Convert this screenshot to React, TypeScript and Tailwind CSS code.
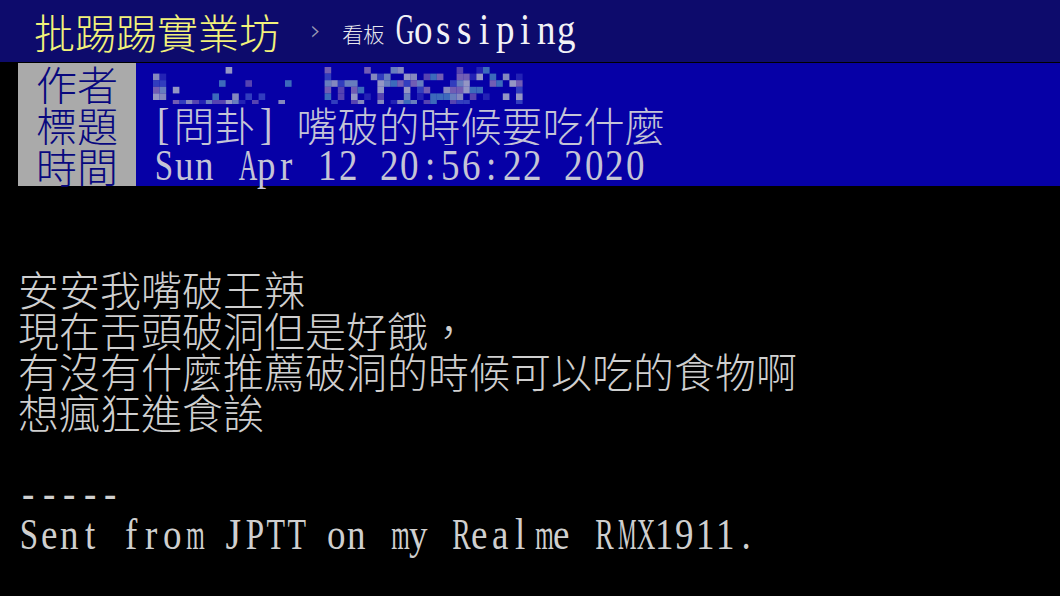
import React from "react";

const cjk = "font-['Noto_Sans_CJK_TC','Noto_Sans_CJK_JP',sans-serif] font-light";

// rough Times advance widths (em) for the wide glyphs, everything else ~0.5
const wide: Record<string, number> = {
  m: 0.78, M: 0.89, w: 0.72, W: 0.94, X: 0.72, R: 0.67, G: 0.72, T: 0.61,
  P: 0.56, S: 0.56, A: 0.72, J: 0.39, o: 0.5, n: 0.5, p: 0.5, g: 0.5,
};

// half-width latin text: one fixed cell per character, like the terminal font
function L({ children }: { children: string }) {
  return (
    <span className="whitespace-pre">
      {children.split("").map((ch, i) => {
        const w = (wide[ch] ?? 0.5) * 40;
        const sx = Math.min(1, 18.5 / w);
        return (
          <span
            key={i}
            className="inline-block h-[41px] w-[20.5px] align-top text-center font-['Liberation_Serif',serif] font-normal text-[40px] leading-[41px]"
            style={{ transform: `translateY(-1px) scale(${sx}, 1.13)` }}
          >
            {ch === " " ? "\u00a0" : ch}
          </span>
        );
      })}
    </span>
  );
}

const palette = ["#7f9cc4", "#a4aac4", "#3c4cc4", "#6a54b4", "#4a84c0", "#8c74b8", "#b8bccc", "#2a2ab8"];

function Mosaic() {
  let seed = 23;
  const rnd = () => {
    seed = (seed * 9301 + 49297) % 233280;
    return seed / 233280;
  };
  const cells: { x: number; y: number; c: string }[] = [];
  const size = 6.6;
  for (let row = 0; row < 6; row++) {
    for (let col = 0; col < 56; col++) {
      const ax = 155 + col * size;
      let p = 0;
      if (ax < 166) p = row > 0 && row < 5 ? 0.9 : 0;
      else if (ax < 300) p = row === 5 ? 0.7 : row >= 2 ? 0.16 : 0.03;
      else if (ax < 322) p = 0;
      else if (ax < 522) p = row === 0 ? 0.3 : 0.5;
      if (rnd() < p) {
        cells.push({ x: col * size, y: 4 + row * size, c: palette[Math.floor(rnd() * palette.length)] });
      }
    }
  }
  return (
    <svg width="372" height="41" className="inline-block align-top">
      {cells.map((c, i) => (
        <rect key={i} x={c.x} y={c.y} width={size} height={size} fill={c.c} opacity={0.8} />
      ))}
    </svg>
  );
}

function MetaLine({ tag, children }: { tag: string; children: React.ReactNode }) {
  return (
    <div className="flex h-[41px]">
      <div className="w-[18px] bg-black" />
      <div className={`w-[118px] bg-[#aaaaaa] px-[18px] text-[#08087e] ${cjk}`}>{tag}</div>
      <div className="flex-1 bg-[#0600a6] pl-[17px] text-[#c4c4d6] whitespace-nowrap">{children}</div>
    </div>
  );
}

export default function App() {
  return (
    <div className={`w-[1060px] h-[596px] overflow-hidden bg-black text-[41px] leading-[41px] ${cjk}`}>
      {/* Top bar */}
      <div className="flex h-[62px] items-center bg-[#0d0b6c] pl-[34px]">
        <span className="text-[#f2f27a] text-[41px] leading-none">批踢踢實業坊</span>
        <span className="ml-[30px] text-[28px] leading-none text-[#9a9ab4] font-['DejaVu_Sans',sans-serif]">›</span>
        <span className="ml-[21px] text-[21px] leading-none text-[#e8e8ee] mt-[4px]">看板</span>
        <span className="ml-[8px] h-[41px] text-[#f2f2f6] leading-[41px] -mt-[4px]">
          <L>Gossiping</L>
        </span>
      </div>

      {/* Meta */}
      <div className="mt-[1px]">
        <MetaLine tag="作者">
          <Mosaic />
        </MetaLine>
        <MetaLine tag="標題">
          <L>[</L>問卦<L>] </L>嘴破的時候要吃什麼
        </MetaLine>
        <MetaLine tag="時間">
          <L>Sun Apr 12 20:56:22 2020</L>
        </MetaLine>
      </div>

      {/* Body */}
      <div className="pl-[18px] pt-[82px] text-[#cfcfcf]">
        <div className="h-[41px]">安安我嘴破王辣</div>
        <div className="h-[41px]">現在舌頭破洞但是好餓，</div>
        <div className="h-[41px]">有沒有什麼推薦破洞的時候可以吃的食物啊</div>
        <div className="h-[41px]">想瘋狂進食誒</div>
        <div className="h-[41px]" />
        <div className="h-[41px]">
          <L>-----</L>
        </div>
        <div className="h-[41px]">
          <L>Sent from JPTT on my Realme RMX1911.</L>
        </div>
      </div>
    </div>
  );
}
